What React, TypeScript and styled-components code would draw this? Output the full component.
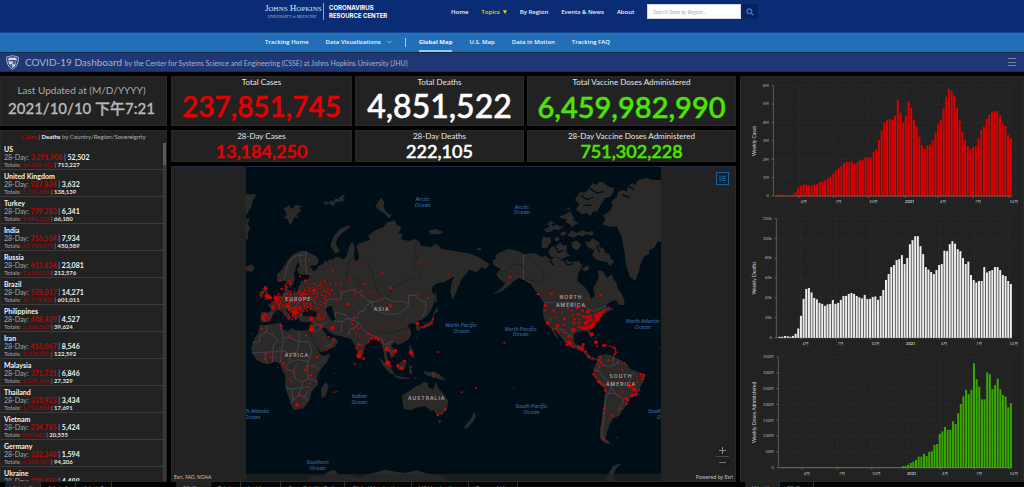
import React from "react";
import styled, { createGlobalStyle } from "styled-components";

const GlobalStyle = createGlobalStyle`
  * { box-sizing: border-box; }
  html, body { margin: 0; padding: 0; background: #000; overflow: hidden; }
  body { font-family: Lato, "Noto Sans CJK TC", sans-serif; color: #fff; }
  button, input { font-family: inherit; margin: 0; padding: 0; border: 0; border-radius: 0; }
  a { color: inherit; text-decoration: none; }
  h1, h2, p, ul { margin: 0; padding: 0; font-weight: 400; }
  ul { list-style: none; }
`;

const RED = "#e60000";
const GREEN = "#4ce600";

/* ---------- Site header ---------- */

const Shell = styled.div`
  display: flex;
  flex-direction: column;
  height: calc(100vh + 8px);
  min-width: 800px;
`;

const SiteHeader = styled.header`
  background: #0a2c74;
  height: 33px;
  border-bottom: 1px solid #15478f;
`;

const Centered = styled.div`
  width: 494px;
  height: 100%;
  margin: 0 auto;
  display: flex;
`;

const Brand = styled.a`
  display: flex;
  align-items: center;
  height: 17px;
  margin-top: 3px;
  width: 186px;
`;

const BrandSchool = styled.span`
  display: flex;
  flex-direction: column;
  width: 59px;
  border-right: 1px solid #8fa3cc;
  font-family: "Liberation Serif", serif;
  color: #dfe6f5;
  font-size: 9px;
  line-height: 10px;
  height: 17px;
  white-space: nowrap;
`;

const SmallCaps = styled.span`
  font-size: 7px;
`;

const BrandSub = styled.span`
  font-size: 4px;
  line-height: 5px;
  text-align: center;
  padding-right: 4px;
  color: #a9b8da;
`;

const BrandCenter = styled.span`
  padding-left: 5px;
  font-family: Inter, sans-serif;
  font-weight: 700;
  font-size: 6px;
  line-height: 8px;
  white-space: nowrap;
`;

const MainNav = styled.nav`
  display: flex;
  gap: 13px;
  margin-top: 4px;
  height: 15px;
  width: 196px;
  align-items: center;
  font-family: "Open Sans", sans-serif;
  font-size: 6px;
  font-weight: 600;
  white-space: nowrap;
`;

const NavLink = styled.a<{ $active?: boolean }>`
  color: ${(p) => (p.$active ? "#f5cf00" : "#eef2fa")};
  svg { margin-left: 3px; }
`;

const SearchForm = styled.form`
  display: flex;
  gap: 1px;
  height: 15px;
  margin-top: 4px;
`;

const SearchInput = styled.input`
  width: 94px;
  background: #fff;
  padding: 0 5px;
  font-family: "Open Sans", sans-serif;
  font-size: 5px;
  font-style: italic;
  border: 1px solid #cfd6e4;
  &::placeholder { color: #a5a5a5; opacity: 1; }
`;

const SearchButton = styled.button`
  width: 16px;
  background: #08225c;
  display: flex;
  align-items: center;
  justify-content: center;
`;

const SubBar = styled.div`
  height: 20px;
  background: #226fb8;
  border-bottom: 1px solid #0c2a4a;
`;

const SubNav = styled.nav`
  width: 494px;
  height: 100%;
  margin: 0 auto;
  display: flex;
  align-items: stretch;
  gap: 17px;
  font-family: "Open Sans", sans-serif;
  font-size: 6px;
  font-weight: 600;
  line-height: 19px;
  white-space: nowrap;
`;

const SubLink = styled.a<{ $current?: boolean }>`
  color: #f0f5fb;
  font-weight: ${(p) => (p.$current ? 700 : 600)};
  border-bottom: 2px solid ${(p) => (p.$current ? "#9cc8ee" : "transparent")};
  svg { margin-left: 6px; }
`;

const SubDivider = styled.span`
  width: 1px;
  height: 9px;
  align-self: center;
  background: #a9cdec;
  margin: 0 -4px;
`;

const TitleBar = styled.div`
  display: flex;
  align-items: center;
  height: 19px;
  background: #1f3773;
  border-bottom: 1px solid #1a2c58;
  padding: 0 8px 0 6px;
`;

const Title = styled.h1`
  flex: 1;
  padding-left: 6px;
  font-size: 10px;
  line-height: 18px;
  color: #aab2c6;
  white-space: nowrap;
`;

const TitleSmall = styled.span`
  font-size: 7px;
`;

const MenuButton = styled.button`
  background: none;
  width: 8px;
  height: 8px;
  display: flex;
  flex-direction: column;
  justify-content: space-between;
  span { height: 1px; background: #7482a8; }
`;

/* ---------- Dashboard ---------- */

const Board = styled.main`
  flex: 1;
  min-height: 0;
  display: grid;
  grid-template-columns: 167fr 565fr 284fr;
  gap: 4px;
  padding-top: 4px;
`;

const Column = styled.section`
  display: flex;
  flex-direction: column;
  min-width: 0;
  min-height: 0;
`;

const Panel = styled.div`
  background: #222;
  border: 1px solid #292929;
`;

const UpdatedPanel = styled(Panel)`
  height: 50px;
  margin-bottom: 4px;
  padding: 6px 4px 0 0;
  text-align: center;
  color: #adadad;
  white-space: nowrap;
`;

const UpdatedLabel = styled.h2`
  font-size: 10px;
  line-height: 14px;
`;

const UpdatedValue = styled.p`
  font-size: 15px;
  line-height: 22px;
  font-weight: 500;
  color: #b8b8b8;
  -webkit-text-stroke: 0.3px #b8b8b8;
`;

const ListPanel = styled(Panel)`
  flex: 1;
  min-height: 0;
  overflow: hidden;
  display: flex;
  flex-direction: column;
`;

const ListHeading = styled.h2`
  font-size: 6px;
  line-height: 12px;
  text-align: center;
  color: #b0b0b0;
  white-space: nowrap;
  b { color: #eee; font-weight: 700; }
  em { color: #c00000; font-style: normal; }
`;

const ListBody = styled.div`
  flex: 1;
  min-height: 0;
  display: flex;
`;

const CountryList = styled.ul`
  flex: 1;
  overflow: hidden;
`;

const CountryRow = styled.li`
  height: 27px;
  padding: 2px 3px 0;
  border-bottom: 1px solid #3c3c3c;
  color: #a8a8a8;
  white-space: nowrap;
`;

const CountryName = styled.p`
  font-size: 7px;
  line-height: 8px;
  font-weight: 700;
  color: #f2f2f2;
`;

const RecentLine = styled.p`
  font-size: 7px;
  line-height: 8px;
  em { color: #c80000; font-style: normal; font-weight: 700; }
  b { color: #f2f2f2; font-weight: 700; }
`;

const TotalLine = styled.p`
  font-size: 6px;
  line-height: 7px;
  em { color: #b40000; font-style: normal; }
  b { color: #e0e0e0; font-weight: 700; }
`;

const ScrollTrack = styled.div`
  width: 3px;
  background: #3a3a3a;
`;

const ScrollThumb = styled.div`
  height: 22px;
  background: #5a5a5a;
`;

const StatGrid = styled.div`
  display: grid;
  grid-template-columns: 181fr 169fr 209fr;
  grid-template-rows: 50px 32px;
  gap: 4px 3px;
  margin-bottom: 4px;
`;

const StatCard = styled(Panel)<{ $tint: string }>`
  text-align: center;
  white-space: nowrap;
  color: ${(p) => p.$tint};
  display: flex;
  flex-direction: column;
`;

const StatLabel = styled.h2`
  font-size: 8px;
  line-height: 11px;
  color: #e6e6e6;
`;

const StatValue = styled.p<{ $size: number }>`
  flex: 1;
  display: flex;
  align-items: center;
  justify-content: center;
  padding-bottom: 1px;
  font-size: ${(p) => p.$size}px;
  line-height: ${(p) => p.$size}px;
  font-weight: 500;
  -webkit-text-stroke: 0.5px currentColor;
`;

const MapPanel = styled.div`
  position: relative;
  flex: 1;
  min-height: 0;
  background: #222;
  border: 1px solid #1d2b45;
  overflow: hidden;
`;

const MapDrawing = styled.svg`
  display: block;
  width: 100%;
  height: 100%;
`;

const Attribution = styled.div`
  position: absolute;
  left: 0;
  right: 0;
  bottom: 0;
  height: 7px;
  padding: 0 2px;
  display: flex;
  justify-content: space-between;
  background: rgba(36, 36, 36, 0.7);
  color: #c4c4c4;
  font-family: "Noto Sans", sans-serif;
  font-size: 5px;
  line-height: 7px;
`;

const LegendButton = styled.button`
  position: absolute;
  top: 5px;
  right: 6px;
  width: 13px;
  height: 13px;
  background: #1b1f24;
  border: 1px solid #17609a;
  display: flex;
  align-items: center;
  justify-content: center;
`;

const ZoomGroup = styled.div`
  position: absolute;
  right: 6px;
  bottom: 13px;
  width: 13px;
`;

const ZoomButton = styled.button`
  display: flex;
  align-items: center;
  justify-content: center;
  width: 13px;
  height: 12px;
  background: #202020;
  & + & { border-top: 1px solid #4a4a4a; }
`;

const ChartPanel = styled(Panel)`
  flex: 1;
  min-height: 0;
  display: flex;
  flex-direction: column;
`;

const ChartDrawing = styled.svg`
  display: block;
  width: 100%;
  flex: 1;
  min-height: 0;
`;

const TabStrip = styled.div`
  flex: none;
  display: flex;
  height: 13px;
  padding-left: 5px;
  overflow: hidden;
`;

const Tab = styled.button<{ $selected?: boolean }>`
  flex: none;
  padding: 1px 7px 0;
  background: ${(p) => (p.$selected ? "#222" : "#060606")};
  border-right: 1px solid #303030;
  color: #8a8a8a;
  font-size: 6px;
  line-height: 10px;
  display: flex;
  white-space: nowrap;
`;

/* ---------- Data ---------- */

type Country = { name: string; recent: [string, string]; total?: [string, string] };

const countries: Country[] = [
  { name: "US", recent: ["3,291,908", "52,502"], total: ["44,339,485", "713,227"] },
  { name: "United Kingdom", recent: ["927,824", "3,632"], total: ["8,192,586", "138,139"] },
  { name: "Turkey", recent: ["779,283", "6,341"], total: ["7,444,522", "66,180"] },
  { name: "India", recent: ["716,554", "7,934"], total: ["33,953,475", "450,589"] },
  { name: "Russia", recent: ["611,834", "23,081"], total: ["7,658,923", "212,576"] },
  { name: "Brazil", recent: ["578,017", "14,271"], total: ["21,575,820", "601,011"] },
  { name: "Philippines", recent: ["448,429", "4,527"], total: ["2,666,562", "39,624"] },
  { name: "Iran", recent: ["416,067", "8,546"], total: ["5,702,890", "122,592"] },
  { name: "Malaysia", recent: ["371,721", "6,846"], total: ["2,339,594", "27,329"] },
  { name: "Thailand", recent: ["331,923", "3,434"], total: ["1,710,884", "17,691"] },
  { name: "Vietnam", recent: ["234,785", "5,424"], total: ["839,662", "20,555"] },
  { name: "Germany", recent: ["232,348", "1,594"], total: ["4,318,437", "94,206"] },
  { name: "Ukraine", recent: ["228,858", "4,488"] },
];

const stats = [
  { label: "Total Cases", value: "237,851,745", tint: RED, size: 28 },
  { label: "Total Deaths", value: "4,851,522", tint: "#fff", size: 32 },
  { label: "Total Vaccine Doses Administered", value: "6,459,982,990", tint: GREEN, size: 29 },
  { label: "28-Day Cases", value: "13,184,250", tint: RED, size: 18 },
  { label: "28-Day Deaths", value: "222,105", tint: "#fff", size: 18 },
  { label: "28-Day Vaccine Doses Administered", value: "751,302,228", tint: GREEN, size: 18 },
];

const weeklyCases = [
  0.05, 0.08, 0.08, 0.03, 0.02, 0.05, 0.07, 0.2, 0.42, 0.57, 0.63, 0.62, 0.58, 0.58, 0.63, 0.66, 0.75, 0.8, 0.87, 0.95,
  1.05, 1.22, 1.4, 1.5, 1.62, 1.8, 1.87, 1.84, 1.87, 1.78, 1.84, 1.95, 1.94, 2.1, 2.1, 2.1, 2.4, 2.52, 3.05, 3.57, 4.0,
  4.12, 4.2, 4.15, 4.38, 5.23, 4.53, 4.0, 4.38, 5.15, 4.8, 4.15, 3.78, 3.23, 2.75, 2.57, 2.75, 2.8, 3.02, 3.45, 3.93,
  4.15, 4.75, 5.4, 5.82, 5.72, 5.48, 4.78, 4.1, 3.5, 3.02, 2.7, 2.57, 2.65, 2.72, 3.12, 3.6, 3.78, 4.2, 4.42, 4.6, 4.6,
  4.63, 4.4, 3.93, 3.82, 3.33, 3.13,
];

const weeklyDeaths = [
  1, 1, 1.7, 1.5, 1, 1.8, 4, 9.3, 22, 39, 49, 50, 45.5, 40, 38.5, 35, 34, 32, 33.5, 34, 38, 34, 35, 38, 42, 42, 44, 45,
  44, 42, 40.5, 39.5, 43, 39, 39, 41, 41.5, 38, 42, 48, 58, 64, 71, 73, 78, 79, 83, 74, 80, 94, 98, 102, 102, 92, 84, 71,
  68.5, 66, 64, 68, 73, 74, 87.5, 87, 94, 97, 94.5, 89, 87, 80, 74, 76.5, 63, 58, 55.5, 57, 57, 71, 65.5, 67, 68, 71, 71,
  68, 63, 62, 57, 54,
];

const weeklyDoses = [
  ...Array(46).fill(0.8),
  5, 5, 9, 15, 19, 25, 35, 35, 44, 37, 50, 52, 72, 75, 107, 115, 129, 120, 120, 147, 138, 172, 201, 226, 246, 232, 246,
  330, 280, 256, 216, 216, 301, 295, 248, 261, 282, 248, 230, 225, 191, 204,
];

/* ---------- Charts ---------- */

type ChartProps = {
  title: string;
  color: string;
  data: number[];
  max: number;
  ticks: string[];
  left: number;
  top: number;
  bottom: number;
  months: number[];
};

const monthNames = ["4月", "7月", "10月", "2021", "4月", "7月", "10月"];

function BarChart({ title, color, data, max, ticks, left, top, bottom, months }: ChartProps) {
  const right = 816;
  const first = left + 7;
  const step = (right - first + 2) / data.length;
  const scale = (bottom - top) / max;
  const mid = (top + bottom) / 2;
  return (
    <ChartDrawing viewBox="0 0 849 406" role="img" aria-label={title}>
      {ticks.map((t, i) => {
        const y = bottom - ((bottom - top) * i) / (ticks.length - 1);
        return (
          <g key={t}>
            <line x1={left} x2={right} y1={y} y2={y} stroke="#343434" strokeWidth="2" strokeDasharray="6 4" />
            <line x1={left - 6} x2={left} y1={y} y2={y} stroke="#777" strokeWidth="2" />
            <text x={left - 14} y={y + 4} textAnchor="end" fontSize="12" fill="#b8b8b8">{t}</text>
          </g>
        );
      })}
      {months.map((x, i) => (
        <g key={x}>
          <line x1={x} x2={x} y1={top} y2={bottom} stroke="#343434" strokeWidth="2" strokeDasharray="6 4" />
          <text x={x + 14} y={bottom + 21} textAnchor="middle" fontSize="12" fill="#c4c4c4" fontWeight={i === 3 ? 700 : 400}>
            {monthNames[i]}
          </text>
        </g>
      ))}
      {data.map((v, i) => (
        <rect key={i} x={first + i * step} width="6" y={bottom - v * scale} height={v * scale + 1} fill={color} />
      ))}
      <line x1={left} x2={left} y1={top} y2={bottom} stroke="#777" strokeWidth="2" />
      <line x1={left} x2={right} y1={bottom} y2={bottom} stroke="#999" strokeOpacity="0.7" strokeWidth="2" />
      {months.map((x) => (
        <line key={x} x1={x} x2={x} y1={bottom} y2={bottom + 6} stroke="#777" strokeWidth="2" />
      ))}
      <text x="46" y={mid} transform={`rotate(-90 46 ${mid})`} textAnchor="middle" fontSize="15" fill="#cfcfcf">{title}</text>
    </ChartDrawing>
  );
}

/* ---------- World map ---------- */

const eastLand = [
  "M287,470 288,441 312,443 320,432 307,421 322,412 336,406 348,394 358,384 359,368 366,360 370,376 382,384 400,378 404,362 408,348 424,345 434,336 432,328 410,330 400,326 396,314 404,302 402,290 394,300 390,316 386,326 390,340 384,360 374,366 366,350 356,346 346,352 336,350 336,328 352,312 366,288 384,268 406,258 424,258 438,266 454,274 462,288 456,300 440,302 434,300 444,318 456,314 460,302 476,296 478,286 484,292 492,284 508,282 510,276 524,276 534,284 544,276 550,252 556,236 564,232 570,250 566,272 572,290 582,280 580,262 574,246 582,234 598,230 614,224 610,212 630,196 652,188 668,172 688,166 696,180 710,186 700,204 712,208 708,222 730,228 752,222 764,232 768,242 800,246 812,236 832,252 870,258 892,262 920,268 945,278 973,298 962,312 950,306 936,322 912,314 900,332 892,338 884,356 872,384 862,404 856,382 860,352 868,334 850,344 838,352 818,354 804,364 800,378 812,394 806,416 798,436 786,454 768,466 758,468 766,488 764,500 754,494 752,478 740,474 728,480 736,494 738,510 728,526 712,534 700,540 688,532 678,540 692,560 690,574 678,580 672,562 664,562 668,580 678,604 668,600 658,580 656,558 648,536 640,524 626,520 612,532 598,546 596,566 586,582 578,564 570,542 558,522 546,518 530,514 508,510 494,502 480,488 470,490 484,510 492,522 508,516 520,530 508,546 480,558 466,562 452,536 440,512 434,496 438,478 440,470 424,472 406,470 400,456 392,468 384,454 372,438 360,430 372,450 380,456 372,468 360,454 350,440 340,434 326,446 318,462 306,472Z",
  "M284,480 302,480 346,474 352,490 368,500 380,490 396,498 430,496 440,514 450,532 462,562 472,572 496,568 488,588 466,616 456,634 460,658 440,678 434,704 416,730 386,736 378,718 368,690 360,662 362,632 350,614 350,600 332,590 310,598 292,594 274,584 262,566 258,550 268,522 280,502Z",
  "M468,670 482,652 491,662 482,694 470,699Z",
  "M298,362 308,372 306,380 318,394 320,402 298,406 302,390 294,376Z",
  "M284,380 296,376 294,396 284,398Z",
  "M243,306 258,298 270,308 262,320 243,318Z",
  "M243,88 276,88 264,106 258,128 243,150Z",
  "M243,162 254,160 248,178 256,188 248,206 250,220 243,226Z",
  "M355,130 366,126 372,118 376,132 384,128 392,120 410,124 404,130 408,138 394,146 400,160 388,156 384,166 376,182 368,162 358,160 366,148Z",
  "M474,114 484,108 490,114 500,106 506,110 512,98 518,102 530,92 542,88 534,98 540,106 520,112 512,110 506,124 494,116 484,120Z",
  "M496,242 506,214 522,194 552,180 556,186 534,202 520,216 512,234 520,252 526,262 510,264Z",
  "M632,122 648,98 658,110 656,128 664,142 680,150 672,160 656,144 640,134Z",
  "M790,196 814,192 836,202 822,208 796,208Z",
  "M816,426 820,440 808,446 806,468 796,482 772,492 766,486 786,476 800,464 806,444Z",
  "M812,372 816,404 814,416 810,396Z",
  "M638,574 656,590 680,612 690,630 676,626 656,604Z",
  "M688,630 716,636 740,642 712,643 690,637Z",
  "M694,600 708,592 718,582 726,592 718,616 700,614Z",
  "M732,602 746,602 738,610 744,626 734,626Z",
  "M732,538 742,552 750,580 738,576 734,560Z",
  "M774,616 790,622 808,620 826,630 842,646 820,642 804,636 782,630Z",
  "M712,690 734,678 752,664 764,660 776,650 790,654 790,666 804,674 812,650 820,668 834,684 850,708 846,732 832,750 816,750 806,736 796,738 782,724 760,726 736,736 716,732 712,706Z",
  "M818,766 830,766 824,776Z",
  "M425,948 452,930 474,936 488,920 508,914 520,928 556,930 584,940 610,928 640,920 660,914 690,920 720,924 754,916 790,926 834,934 846,948Z",
];

const westLand = [
  "M128,286 140,280 134,272 150,262 176,252 204,258 222,268 252,264 278,276 284,272 302,284 318,276 336,288 350,284 362,292 386,288 398,302 384,326 382,348 402,364 416,382 424,402 434,392 430,370 438,354 446,338 442,316 458,318 470,338 486,328 492,346 500,354 504,372 512,382 522,402 524,420 508,420 498,406 482,410 466,422 490,432 474,440 460,450 446,468 430,488 420,498 428,520 420,514 412,500 396,498 380,502 370,512 374,534 388,546 402,534 404,546 398,556 412,562 422,578 442,580 448,586 424,586 412,576 398,560 374,550 350,542 336,520 320,500 310,490 318,506 328,522 316,514 304,492 292,478 282,462 278,440 282,414 270,396 256,370 244,354 226,346 206,338 192,348 172,366 152,380 128,388 154,370 166,354 148,342 138,328 152,312 130,300Z",
  "M442,576 460,568 488,572 510,584 532,596 540,612 564,620 586,628 582,646 570,668 562,690 540,700 528,722 516,738 508,752 490,760 478,780 472,800 466,822 480,838 462,834 450,818 450,790 456,758 460,720 466,690 462,670 444,654 430,634 430,610 440,596Z",
  "M455,178 466,166 460,150 478,140 488,122 484,110 500,96 504,80 520,74 530,80 534,64 548,54 556,60 564,46 590,38 606,44 633,46 633,232 624,228 612,250 598,254 598,268 584,272 574,290 566,320 556,348 540,336 528,300 524,262 514,214 500,184 480,186Z",
  "M375,104 392,78 402,84 414,74 428,54 440,60 446,50 462,52 472,64 494,70 488,84 480,96 466,98 454,116 440,142 432,136 420,154 410,144 396,148 378,134 388,118Z",
  "M404,228 416,232 428,220 450,234 446,244 462,252 466,264 478,268 482,280 492,290 480,304 470,290 462,290 440,284 426,270 434,256 412,246Z",
  "M274,248 278,214 290,218 300,216 304,230 290,250Z",
  "M294,262 306,244 318,244 330,232 340,242 352,240 348,260 362,272 348,276 332,284 322,276 304,276Z",
  "M282,192 294,188 302,176 310,184 320,178 330,186 344,180 336,190 322,196 314,192 300,202 286,200Z",
  "M290,180 300,168 314,172 302,180Z",
  "M352,212 366,196 380,204 398,196 412,202 430,198 428,212 410,208 396,214 384,210 372,218Z",
  "M326,150 336,152 350,146 362,138 366,150 372,158 370,166 386,174 374,180 366,186 358,176 346,172 350,162 334,160Z",
  "M330,206 342,198 350,206 338,214Z",
  "M364,232 380,226 394,240 382,256 368,250Z",
  "M312,222 324,214 330,224 318,230Z",
  "M350,132 358,126 362,132 354,136Z",
  "M396,312 414,300 418,312 404,320Z",
  "M72,740 78,752 72,766 52,790 40,790 54,772 66,756Z",
  "M466,948 476,926 488,904 515,893 500,908 490,930 494,948Z",
  "M82,250 92,249 94,255 82,255Z",
];

const lakes = [
  "M412,452 416,438 430,428 438,436 452,440 460,452 442,456 426,454Z",
  "M486,426 500,422 504,440 512,464 502,470 490,450 482,434Z",
];

const eastBorders = [
  "M356,346 362,324 368,300 384,278 404,268 414,272 424,262 M404,268 408,300 M424,262 420,290 426,330",
  "M404,362 400,380 408,392 420,400 444,404 456,420 M336,406 344,420 342,434 M358,384 360,400 372,410 392,412 M376,386 380,404 400,414 408,404 M372,432 390,430 400,414 M400,456 412,450",
  "M312,443 322,446 M298,442 296,470",
  "M484,404 500,402 528,402 530,382 560,374 584,384 606,406 622,410 600,424 596,438 582,440 576,458 556,462 540,450 512,442 510,460 M484,404 482,430",
  "M622,410 640,408 660,398 682,410 712,408 732,416 724,430 700,446 668,448 640,440 622,424Z",
  "M732,416 730,390 752,392 762,404 784,412 780,440 768,458",
  "M504,468 530,470 546,460 562,466 580,470 574,486 556,492 550,510 M530,470 528,502 M580,470 590,490 612,508 630,514 650,520 M650,520 656,540 664,536 684,530",
  "M450,478 470,480 486,470 M450,478 444,496 452,500 470,490 M480,546 500,536 508,520",
  "M306,480 304,500 284,512 M284,512 284,530 262,532 M304,500 340,524 M346,474 350,500 356,520 370,516 402,530 402,496 M402,530 432,530 M340,524 326,540 324,560 300,562 262,564 M356,520 350,556 326,562 M402,530 398,560 376,566 350,556 M432,530 440,560 430,590 400,584 376,590 360,606 M300,562 304,596 M324,560 322,590 M350,556 346,592 M376,566 374,590",
  "M362,614 386,618 396,600 M386,618 390,640 412,650 430,640 426,604 450,602 462,616 M412,650 410,668 380,672 362,670 M410,668 430,666 438,676 M380,672 384,706 376,716 M384,706 400,690 420,696 424,704 M430,590 424,610 M430,640 456,650 M400,690 410,668 M420,696 428,676",
  "M656,558 664,548 678,560 M664,536 668,552 688,560 M804,620 806,640",
];

const rivers = [
  "M545,334 548,300 560,280 M545,334 572,344 590,366 M606,282 620,320 634,364 640,390 M748,240 756,280 742,306 766,322 764,336 730,344 700,360 680,370 672,400",
  "M640,498 670,504 694,500 722,490 736,490",
];

const westBorders = [
  "M220,268 220,345",
  "M282,413 378,413 396,420 416,432 430,440 452,430 468,422",
  "M308,490 340,494 356,508 368,516 M226,346 244,356 260,380",
  "M388,552 398,544 M452,572 450,590 462,600 M440,612 450,620 462,640 480,652 486,672 474,684 468,690 M462,600 474,604 490,602 500,594 M486,672 500,690 520,700 520,716 508,724 506,740 M450,600 440,620 M490,575 488,600 M506,584 504,600 M468,690 464,740 458,790 456,820 478,832 M474,684 496,686",
];

const westRivers = [
  "M140,322 168,318 188,300 210,298 230,312 M240,276 256,296 276,312 284,334 270,352 240,346 220,330",
  "M380,414 390,424 398,430 M402,432 402,450 M408,430 418,444 M422,446 436,440",
];

const eastDots: [number, number, number][] = [
  [439, 461, 7], [502, 489, 7], [438, 494, 7], [310, 395, 7], [582, 572, 8], [666, 552, 7], [738, 563, 7], [668, 594, 8],
  [710, 610, 6], [691, 558, 6], [396, 719, 6], [548, 418, 5], [676, 423, 5], [324, 427, 6], [468, 485, 5], [389, 441, 8],
  [404, 429, 6], [334, 400, 8], [414, 387, 5], [447, 376, 5], [368, 424, 6], [301, 370, 6], [580, 539, 5], [676, 604, 4],
  [698, 603, 5], [719, 588, 4], [758, 475, 5], [800, 475, 4], [790, 479, 4], [780, 483, 4], [770, 487, 3], [804, 462, 3],
  [818, 750, 4], [841, 733, 4], [833, 741, 2], [457, 576, 4], [438, 631, 4], [378, 648, 3], [403, 687, 4], [356, 596, 4],
  [325, 506, 3], [376, 513, 3], [291, 492, 4], [259, 506, 2], [423, 511, 3], [350, 483, 4], [474, 521, 2], [509, 625, 2],
  [508, 682, 3], [516, 680, 2], [653, 323, 3], [765, 293, 3], [850, 329, 2], [504, 318, 3], [465, 319, 2], [574, 291, 2],
  [433, 284, 3], [433, 327, 3], [405, 334, 3], [421, 347, 4], [372, 308, 2], [346, 344, 3], [376, 350, 3], [678, 369, 4],
  [556, 340, 3], [530, 355, 3], [512, 357, 3], [571, 373, 3], [560, 354, 2], [600, 357, 3], [617, 382, 3], [590, 393, 3],
  [635, 388, 2], [696, 392, 2], [717, 395, 2], [760, 391, 3], [788, 398, 3], [734, 405, 2], [780, 420, 2], [812, 408, 2],
  [773, 415, 2], [641, 401, 2], [819, 561, 3], [570, 596, 3], [596, 581, 4], [608, 506, 4], [650, 531, 3], [620, 520, 4],
  [632, 518, 5], [640, 524, 4], [567, 492, 3], [580, 490, 3], [572, 506, 3], [584, 514, 3], [590, 540, 3], [574, 550, 3],
  [586, 560, 5], [610, 530, 3], [598, 550, 2], [555, 505, 2], [540, 515, 2], [541, 450, 3], [568, 456, 3], [560, 466, 3],
  [562, 477, 3], [573, 482, 3], [688, 470, 2], [708, 487, 2], [726, 463, 2], [700, 506, 2], [712, 521, 2], [688, 516, 2],
  [670, 478, 2], [652, 486, 2], [730, 498, 2], [756, 517, 2], [674, 539, 3], [680, 566, 4], [814, 629, 2], [752, 639, 2],
  [480, 674, 2], [476, 590, 2], [447, 608, 2], [428, 604, 3], [421, 616, 4], [389, 622, 2], [434, 655, 3], [410, 646, 2],
  [415, 716, 3], [426, 704, 3], [380, 691, 2], [417, 675, 2], [440, 677, 2], [363, 608, 3], [350, 603, 3], [339, 607, 2],
  [324, 577, 3], [316, 577, 3], [298, 581, 3], [283, 583, 2], [265, 564, 2], [310, 568, 2], [334, 576, 2], [346, 577, 2],
  [362, 568, 2], [290, 562, 2], [277, 534, 2], [344, 548, 2], [385, 550, 2], [420, 560, 2], [350, 586, 2], [300, 570, 2],
  [291, 459, 4], [303, 447, 3], [310, 457, 3], [297, 464, 3], [314, 466, 2], [302, 458, 2], [320, 450, 2], [492, 516, 3],
  [508, 526, 3], [505, 532, 2], [497, 546, 2], [484, 556, 2], [439, 484, 5], [452, 472, 3], [249, 310, 2], [286, 390, 3],
  [293, 382, 4], [303, 393, 5], [318, 398, 4], [340, 386, 3], [350, 372, 4], [362, 364, 3], [325, 412, 3],
];

const westDots: [number, number, number][] = [
  [180, 337, 4], [49, 301, 1], [16, 366, 2], [275, 310, 2], [264, 387, 4], [304, 386, 4], [338, 391, 3], [365, 388, 3],
  [413, 401, 3], [452, 391, 4], [559, 247, 1], [286, 421, 5], [284, 436, 4], [293, 474, 6], [311, 437, 4], [325, 421, 3],
  [344, 461, 5], [322, 483, 6], [340, 480, 4], [370, 495, 7], [336, 445, 3], [319, 457, 3], [303, 463, 3], [354, 431, 3],
  [364, 437, 3], [382, 428, 5], [368, 451, 3], [373, 463, 4], [372, 475, 4], [388, 475, 4], [387, 486, 4], [396, 488, 5],
  [388, 463, 3], [384, 448, 4], [398, 437, 4], [414, 440, 6], [400, 455, 5], [410, 457, 5], [420, 455, 6], [414, 468, 5],
  [407, 475, 6], [424, 464, 4], [430, 476, 6], [426, 484, 7], [416, 487, 6], [406, 490, 6], [436, 466, 5], [440, 455, 7],
  [448, 447, 6], [456, 442, 5], [444, 462, 5], [452, 452, 5], [462, 437, 4], [468, 434, 3], [476, 428, 3], [434, 447, 4],
  [488, 433, 2], [363, 420, 3], [397, 423, 3], [425, 508, 6], [437, 518, 2], [438, 532, 6], [441, 544, 3], [483, 489, 2],
  [320, 494, 3], [308, 495, 2], [326, 503, 3], [338, 500, 3], [346, 505, 3], [356, 514, 4], [362, 520, 3], [348, 519, 3],
  [337, 517, 2], [354, 530, 5], [362, 538, 5], [350, 540, 4], [370, 546, 4], [358, 534, 6], [386, 546, 5], [396, 552, 6],
  [400, 538, 4], [407, 560, 4], [417, 575, 5], [428, 578, 3], [460, 542, 4], [466, 541, 4], [480, 544, 3], [488, 546, 3],
  [494, 550, 4], [497, 558, 3], [496, 565, 3], [500, 562, 2], [493, 570, 3], [628, 550, 2], [163, 534, 3], [35, 682, 3],
  [78, 670, 3], [119, 659, 1], [191, 670, 2], [67, 763, 2], [450, 576, 4], [445, 586, 4], [452, 592, 4], [440, 598, 3],
  [476, 585, 4], [482, 572, 2], [502, 594, 3], [514, 596, 3], [524, 595, 3], [516, 614, 3], [479, 620, 2], [494, 632, 2],
  [436, 616, 3], [431, 628, 4], [438, 636, 3], [446, 650, 5], [454, 656, 4], [462, 660, 4], [466, 676, 4], [464, 692, 2],
  [458, 600, 3], [450, 606, 2], [486, 650, 2], [512, 652, 3], [540, 644, 3], [551, 626, 3], [572, 628, 3], [580, 632, 5],
  [578, 642, 4], [562, 652, 3], [568, 676, 3], [554, 674, 6], [558, 688, 5], [547, 691, 6], [538, 662, 6], [528, 700, 5],
  [534, 706, 4], [530, 717, 4], [516, 730, 3], [517, 682, 3], [505, 691, 3], [487, 752, 4], [463, 732, 4], [460, 745, 3],
  [458, 762, 2], [456, 790, 2], [462, 820, 3], [502, 818, 2], [560, 634, 2], [546, 668, 4],
];

/* Dense regions where provinces are reported one by one. */
const clusters: [number, number, number, number, number][] = [
  [350, 405, 26, 24, 34], [395, 415, 44, 40, 60], [440, 395, 44, 42, 60], [470, 380, 40, 34, 30], [378, 445, 22, 24, 20],
  [468, 450, 16, 16, 18], [306, 456, 18, 14, 16], [372, 365, 12, 24, 12], [540, 385, 60, 26, 10],
];

const clusterDots = clusters.flatMap(([cx, cy, rx, ry, n], k) =>
  Array.from({ length: n }, (_, i) => {
    const angle = i * 2.399 + k;
    const reach = Math.sqrt((i + 0.5) / n);
    return [cx + Math.cos(angle) * rx * reach, cy + Math.sin(angle) * ry * reach, 1.4 + ((i * 7) % 5) * 0.45];
  })
);

const oceanLabels: [number, number, string, string][] = [
  [773, 108, "Arctic", "Ocean"],
  [1071, 131, "Arctic", "Ocean"],
  [583, 700, "Indian", "Ocean"],
  [262, 745, "South Atlantic", "Ocean"],
  [458, 897, "Southern", "Ocean"],
  [889, 487, "North Pacific", "Ocean"],
  [1067, 497, "North Pacific", "Ocean"],
  [1434, 475, "North Atlantic", "Ocean"],
  [1100, 730, "South Pacific", "Ocean"],
  [1500, 745, "South Atlantic", "Ocean"],
];

const landLabels: [number, number, string][] = [
  [400, 408, "EUROPE"],
  [650, 437, "ASIA"],
  [396, 576, "AFRICA"],
  [785, 706, "AUSTRALIA"],
  [1218, 401, "NORTH"],
  [1218, 426, "AMERICA"],
  [1368, 640, "SOUTH"],
  [1368, 664, "AMERICA"],
];

function WorldMap() {
  return (
    <MapDrawing viewBox="21 6 1689 942" role="img" aria-label="World map of cases">
      <defs>
        <clipPath id="world">
          <rect x="243" y="0" width="1245" height="960" />
        </clipPath>
      </defs>
      <g clipPath="url(#world)">
        <rect x="243" y="0" width="1245" height="960" fill="#000e18" />
        <g fill="#2b2a28">
          {eastLand.map((d) => <path key={d} d={d} />)}
        </g>
        <g fill="#000e18">
          {lakes.map((d) => <path key={d} d={d} />)}
        </g>
        <g fill="none" stroke="#4b4755" strokeWidth="2.4">
          {eastBorders.map((d) => <path key={d} d={d} />)}
        </g>
        <g fill="none" stroke="#1c2029" strokeWidth="3">
          {rivers.map((d) => <path key={d} d={d} />)}
        </g>
        <g transform="translate(855 0)">
          <g fill="#2b2a28">
            {westLand.map((d) => <path key={d} d={d} />)}
          </g>
          <g fill="none" stroke="#000e18" strokeWidth="4">
            <path d="M392,92 412,104 430,96 M420,70 440,84 462,80 M400,122 424,120 M312,240 326,262 340,256 M440,240 448,262 M536,64 552,74 M518,90 540,98 M340,282 352,300 370,296 M300,286 310,300" />
          </g>
          <g fill="none" stroke="#4b4755" strokeWidth="2.4">
            {westBorders.map((d) => <path key={d} d={d} />)}
          </g>
          <g fill="none" stroke="#1c2029" strokeWidth="3">
            {westRivers.map((d) => <path key={d} d={d} />)}
          </g>
        </g>
        <g fill="#d20000">
          {clusterDots.map(([x, y, r], i) => <circle key={i} cx={x} cy={y} r={r} />)}
          {eastDots.map(([x, y, r], i) => <circle key={i} cx={x} cy={y} r={r} />)}
          {westDots.map(([x, y, r], i) => <circle key={i} cx={x + 855} cy={y} r={r} />)}
        </g>
        <g fontFamily="Inter, sans-serif" fontSize="15" fontWeight="600" fontStyle="italic" fill="#2f6496" textAnchor="middle">
          {oceanLabels.map(([x, y, a, b]) => (
            <text key={`${x}-${y}`} x={x} y={y}>
              {a}
              <tspan x={x} dy="17">{b}</tspan>
            </text>
          ))}
        </g>
        <g fontFamily="Inter, sans-serif" fontSize="15" fontWeight="600" letterSpacing="3" fill="#a2a2a2" textAnchor="middle">
          {landLabels.map(([x, y, t]) => <text key={`${x}-${y}`} x={x} y={y}>{t}</text>)}
        </g>
      </g>
    </MapDrawing>
  );
}

function Shield() {
  return (
    <svg width="13" height="15" viewBox="0 0 39 45" aria-hidden="true">
      <path d="M2,6 C8,6 14,2 19.500,2 C25,2 31,6 37,6 C38,24 32,36 19.500,43 C7,36 1,24 2,6Z" fill="#24396f" stroke="#c3cbe0" strokeWidth="2.500" />
      <path d="M7,10 Q14,6 19,9 Q25,6 32,10 V17 Q25,13 19,16 Q14,13 7,17Z" fill="#d5dbea" />
      <path d="M7,19 H19 V28 H9Z M19,28 H30 L26,34 19,39Z" fill="#d5dbea" />
      <path d="M19,19 V39 M24,19 V28 M29,19 V28 M13,28 V34 M19,6 V16" stroke="#c3cbe0" strokeWidth="2" fill="none" />
    </svg>
  );
}

function Tabs({ names, label }: { names: string[]; label: string }) {
  return (
    <TabStrip role="tablist" aria-label={label}>
      {names.map((n, i) => (
        <Tab key={n} type="button" role="tab" aria-selected={i === 0} $selected={i === 0}>{n}</Tab>
      ))}
    </TabStrip>
  );
}

export default function App() {
  return (
    <Shell>
      <GlobalStyle />
      <SiteHeader>
        <Centered>
          <Brand href="#">
            <BrandSchool>
              <span>J<SmallCaps>OHNS</SmallCaps> H<SmallCaps>OPKINS</SmallCaps></span>
              <BrandSub>UNIVERSITY of MEDICINE</BrandSub>
            </BrandSchool>
            <BrandCenter>CORONAVIRUS<br />RESOURCE CENTER</BrandCenter>
          </Brand>
          <MainNav>
            <NavLink href="#">Home</NavLink>
            <NavLink href="#" $active>
              Topics
              <svg width="4" height="4" viewBox="0 0 12 12" fill="#f5cf00"><path d="M0,1 H12 L6,12Z" /></svg>
            </NavLink>
            <NavLink href="#">By Region</NavLink>
            <NavLink href="#">Events &amp; News</NavLink>
            <NavLink href="#">About</NavLink>
          </MainNav>
          <SearchForm>
            <SearchInput type="search" placeholder="Search Data by Region..." aria-label="Search data by region" />
            <SearchButton type="button" aria-label="Search">
              <svg width="8" height="8" viewBox="0 0 24 24" fill="none" stroke="#2a7ccc" strokeWidth="4">
                <circle cx="10" cy="10" r="7" />
                <path d="M15,15 22,22" />
              </svg>
            </SearchButton>
          </SearchForm>
        </Centered>
      </SiteHeader>
      <SubBar>
        <SubNav>
          <SubLink href="#">Tracking Home</SubLink>
          <SubLink href="#">
            Data Visualizations
            <svg width="5" height="4" viewBox="0 0 15 12" fill="none" stroke="#9cc8ee" strokeWidth="2.500">
              <path d="M1,2 7.500,9 14,2" />
            </svg>
          </SubLink>
          <SubDivider />
          <SubLink href="#" $current>Global Map</SubLink>
          <SubLink href="#">U.S. Map</SubLink>
          <SubLink href="#">Data in Motion</SubLink>
          <SubLink href="#">Tracking FAQ</SubLink>
        </SubNav>
      </SubBar>
      <TitleBar>
        <Shield />
        <Title>
          COVID-19 Dashboard{" "}
          <TitleSmall>by the Center for Systems Science and Engineering (CSSE) at Johns Hopkins University (JHU)</TitleSmall>
        </Title>
        <MenuButton type="button" aria-label="Menu"><span /><span /><span /></MenuButton>
      </TitleBar>
      <Board>
        <Column>
          <UpdatedPanel>
            <UpdatedLabel>Last Updated at (M/D/YYYY)</UpdatedLabel>
            <UpdatedValue>2021/10/10 下午7:21</UpdatedValue>
          </UpdatedPanel>
          <ListPanel>
            <ListHeading><em>Cases</em> | <b>Deaths</b> by Country/Region/Sovereignty</ListHeading>
            <ListBody>
              <CountryList>
                {countries.map(({ name, recent, total }) => (
                  <CountryRow key={name}>
                    <CountryName>{name}</CountryName>
                    <RecentLine>28-Day: <em>{recent[0]}</em> | <b>{recent[1]}</b></RecentLine>
                    {total && <TotalLine>Totals: <em>{total[0]}</em> | <b>{total[1]}</b></TotalLine>}
                  </CountryRow>
                ))}
              </CountryList>
              <ScrollTrack><ScrollThumb /></ScrollTrack>
            </ListBody>
          </ListPanel>
          <Tabs label="Region level" names={["Admin0", "Admin1", "Admin2"]} />
        </Column>
        <Column>
          <StatGrid>
            {stats.map((s) => (
              <StatCard key={s.label} $tint={s.tint}>
                <StatLabel>{s.label}</StatLabel>
                <StatValue $size={s.size}>{s.value}</StatValue>
              </StatCard>
            ))}
          </StatGrid>
          <MapPanel>
            <WorldMap />
            <Attribution><span>Esri, FAO, NOAA</span><span>Powered by Esri</span></Attribution>
            <LegendButton type="button" aria-label="Legend">
              <svg width="7" height="7" viewBox="0 0 21 21" stroke="#2478bd" strokeWidth="2.500" fill="none">
                <path d="M3,1 V20 M8,4 H20 M8,10 H20 M8,16 H20" />
              </svg>
            </LegendButton>
            <ZoomGroup>
              <ZoomButton type="button" aria-label="Zoom in">
                <svg width="7" height="7" viewBox="0 0 7 7" stroke="#8a8a8a"><path d="M0,3.500 H7 M3.500,0 V7" /></svg>
              </ZoomButton>
              <ZoomButton type="button" aria-label="Zoom out">
                <svg width="7" height="7" viewBox="0 0 7 7" stroke="#777"><path d="M0,3.500 H7" /></svg>
              </ZoomButton>
            </ZoomGroup>
          </MapPanel>
          <Tabs
            label="Map layer"
            names={["28-Day", "Totals", "Incidence", "Case-Fatality Ratio", "Global Vaccinations", "US Vaccinations", "Terms of Use"]}
          />
        </Column>
        <Column>
          <ChartPanel>
            <BarChart
              title="Weekly Cases" color="#dc0000" data={weeklyCases} max={6}
              ticks={["0", "1M", "2M", "3M", "4M", "5M", "6M"]}
              left={97} top={26} bottom={359} months={[175, 280, 385, 494, 595, 700, 808]}
            />
            <BarChart
              title="Weekly Deaths" color="#ededed" data={weeklyDeaths} max={120}
              ticks={["0", "20k", "40k", "60k", "80k", "100k", "120k"]}
              left={106} top={19} bottom={379} months={[180, 286, 391, 497, 598, 703, 808]}
            />
            <BarChart
              title="Weekly Doses Administered" color="#38a800" data={weeklyDoses} max={350}
              ticks={["0", "50M", "100M", "150M", "200M", "250M", "300M", "350M"]}
              left={112} top={33} bottom={367} months={[184, 290, 394, 500, 601, 703, 808]}
            />
          </ChartPanel>
          <Tabs label="Chart period" names={["Weekly", "28-Day"]} />
        </Column>
      </Board>
    </Shell>
  );
}
